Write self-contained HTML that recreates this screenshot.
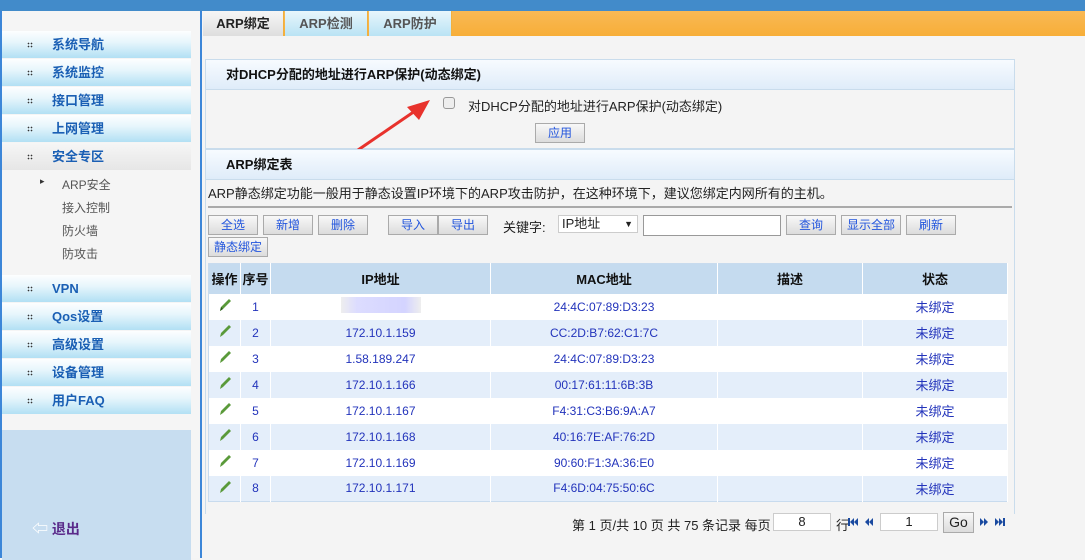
<!DOCTYPE html>
<html><head><meta charset="utf-8"><style>
*{margin:0;padding:0;box-sizing:border-box}
body{width:1085px;height:558px;overflow:hidden;background:#f4f4f4;font-family:"Liberation Sans","Noto Sans CJK SC",sans-serif;font-size:12px;position:relative;color:#222}
.top{position:absolute;left:0;top:0;width:1085px;height:11px;background:#428bca}
.side{position:absolute;left:0;top:11px;width:202px;height:547px;background:#f5f5f5;border-left:2px solid #3c86d8;border-right:2px solid #3c86d8}
.mi{position:absolute;left:0;width:189px;height:27px;background:linear-gradient(#fdfeff,#e8f6fc 40%,#b2e0f4);color:#1a5fb4;font-weight:bold;font-size:13px;line-height:27px;padding-left:50px}
.mi:before{content:"";position:absolute;left:25px;top:11px;width:6px;height:6px;background:radial-gradient(circle,#333 35%,transparent 40%) 0 0/3px 3px}
.mi.g{background:linear-gradient(#f6f6f6,#e6e6e6)}
.sub{position:absolute;left:60px;font-size:12px;color:#555}
.low{position:absolute;left:0;top:419px;width:189px;height:130px;background:#c7ddf0}
.tabs{position:absolute;left:203px;top:11px;width:882px;height:25px;background:linear-gradient(#f9b955,#f7ae38)}
.tab{position:absolute;top:0;height:25px;line-height:25px;text-align:center;font-weight:bold;font-size:13px;color:#555;background:linear-gradient(#e8f6fc,#b9e3f4);border-right:1px solid #f0b040}
.panel{position:absolute;left:205px;width:810px;border:1px solid #c9dcec;background:#f4f4f4}
.ph{height:30px;line-height:30px;padding-left:20px;font-weight:bold;font-size:13px;background:linear-gradient(#f7fbff,#dfecf9);border-bottom:1px solid #c9dcec;color:#111}
.btn{position:absolute;height:20px;border:1px solid #aaa;background:linear-gradient(#f8f8f8,#dcdcdc);color:#2255dd;font-size:12px;line-height:18px;text-align:center}
table{position:absolute;left:208px;top:263px;width:800px;border-collapse:collapse;border:1px solid #c8dbee}
th{height:30px;background:#c5dbef;font-size:13px;border-right:1px solid #fff;color:#111}
td{height:26px;text-align:center;color:#2233bb;font-family:"Liberation Sans",sans-serif;font-size:12px;border-right:1px solid #fff}
tr.a td{background:#fff}tr.b td{background:#e4eefa}
td.s{font-family:"Liberation Sans","Noto Sans CJK SC",sans-serif;font-size:13px}
.pg{position:absolute;font-size:13px;color:#222;white-space:nowrap}
.in{position:absolute;height:18px;border:1px solid #ccc;background:#fff;text-align:center;font-size:13px;line-height:16px}
</style></head><body>
<div class="top"></div>
<div class="side">
<div class="mi" style="top:20px">系统导航</div>
<div class="mi" style="top:48px">系统监控</div>
<div class="mi" style="top:76px">接口管理</div>
<div class="mi" style="top:104px">上网管理</div>
<div class="mi g" style="top:132px">安全专区</div>
<div class="sub" style="top:165px;left:38px;font-size:9px;color:#333">▸</div>
<div class="sub" style="top:165px">ARP安全</div>
<div class="sub" style="top:188px">接入控制</div>
<div class="sub" style="top:211px">防火墙</div>
<div class="sub" style="top:234px">防攻击</div>
<div class="mi" style="top:264px">VPN</div>
<div class="mi" style="top:292px">Qos设置</div>
<div class="mi" style="top:320px">高级设置</div>
<div class="mi" style="top:348px">设备管理</div>
<div class="mi" style="top:376px">用户FAQ</div>
<div class="low"><div style="position:absolute;left:30px;top:85px;font-size:14px;font-weight:bold;color:#5a2a8a"><span style="color:#fff;font-size:16px">⇦</span> 退出</div></div>
</div>
<div class="tabs">
<div class="tab" style="left:0;width:81px;background:linear-gradient(#f6f6f6,#dedede);color:#222">ARP绑定</div>
<div class="tab" style="left:82px;width:83px">ARP检测</div>
<div class="tab" style="left:166px;width:83px">ARP防护</div>
</div>
<div class="panel" style="top:59px;height:90px"><div class="ph">对DHCP分配的地址进行ARP保护(动态绑定)</div>
<div style="position:absolute;left:237px;top:37px;width:12px;height:12px;border:1px solid #999;border-radius:3px;background:#eee"></div>
<div style="position:absolute;left:262px;top:36px;font-size:13px">对DHCP分配的地址进行ARP保护(动态绑定)</div>
<div class="btn" style="left:329px;top:63px;width:50px">应用</div>
</div>
<svg style="position:absolute;left:355px;top:95px" width="80" height="58"><line x1="3" y1="55" x2="60" y2="16" stroke="#e8322c" stroke-width="3"/><polygon points="75,5 52,12 64,25" fill="#e8322c"/></svg>
<div class="panel" style="top:149px;height:365px;border-bottom:none"><div class="ph">ARP绑定表</div>
<div style="position:absolute;left:2px;top:33px;font-size:13px">ARP静态绑定功能一般用于静态设置IP环境下的ARP攻击防护，在这种环境下，建议您绑定内网所有的主机。</div>
<div style="position:absolute;left:2px;top:56px;width:804px;height:2px;background:#aaa"></div>
</div>
<div class="btn" style="left:208px;top:215px;width:50px">全选</div>
<div class="btn" style="left:263px;top:215px;width:50px">新增</div>
<div class="btn" style="left:318px;top:215px;width:50px">删除</div>
<div class="btn" style="left:388px;top:215px;width:50px">导入</div>
<div class="btn" style="left:438px;top:215px;width:50px">导出</div>
<div style="position:absolute;left:503px;top:217px;font-size:13px">关键字:</div>
<div class="in" style="left:558px;top:215px;width:80px;text-align:left;padding-left:3px">IP地址 <span style="position:absolute;right:4px;font-size:9px">▼</span></div>
<div class="in" style="left:643px;top:215px;width:138px;height:21px;border-color:#999"></div>
<div class="btn" style="left:786px;top:215px;width:50px">查询</div>
<div class="btn" style="left:841px;top:215px;width:60px">显示全部</div>
<div class="btn" style="left:906px;top:215px;width:50px">刷新</div>
<div class="btn" style="left:208px;top:237px;width:60px">静态绑定</div>
<table>
<tr><th style="width:32px">操作</th><th style="width:30px">序号</th><th style="width:220px">IP地址</th><th style="width:227px">MAC地址</th><th style="width:145px">描述</th><th>状态</th></tr>
<tr class="a"><td><svg width="14" height="14"><path d="M2 13 L3 9 L11 1 L13 3 L5 11 Z" fill="#5a9a3a"/><path d="M2 13 L3 9 L5 11Z" fill="#2a5a1a"/></svg></td><td>1</td><td><span style="display:inline-block;width:80px;height:16px;background:linear-gradient(90deg,#eee 0,#dcdcff 20%,#d4d4ff 80%,#eee)"></span></td><td>24:4C:07:89:D3:23</td><td></td><td class="s">未绑定</td></tr>
<tr class="b"><td><svg width="14" height="14"><path d="M2 13 L3 9 L11 1 L13 3 L5 11 Z" fill="#5a9a3a"/></svg></td><td>2</td><td>172.10.1.159</td><td>CC:2D:B7:62:C1:7C</td><td></td><td class="s">未绑定</td></tr>
<tr class="a"><td><svg width="14" height="14"><path d="M2 13 L3 9 L11 1 L13 3 L5 11 Z" fill="#5a9a3a"/></svg></td><td>3</td><td>1.58.189.247</td><td>24:4C:07:89:D3:23</td><td></td><td class="s">未绑定</td></tr>
<tr class="b"><td><svg width="14" height="14"><path d="M2 13 L3 9 L11 1 L13 3 L5 11 Z" fill="#5a9a3a"/></svg></td><td>4</td><td>172.10.1.166</td><td>00:17:61:11:6B:3B</td><td></td><td class="s">未绑定</td></tr>
<tr class="a"><td><svg width="14" height="14"><path d="M2 13 L3 9 L11 1 L13 3 L5 11 Z" fill="#5a9a3a"/></svg></td><td>5</td><td>172.10.1.167</td><td>F4:31:C3:B6:9A:A7</td><td></td><td class="s">未绑定</td></tr>
<tr class="b"><td><svg width="14" height="14"><path d="M2 13 L3 9 L11 1 L13 3 L5 11 Z" fill="#5a9a3a"/></svg></td><td>6</td><td>172.10.1.168</td><td>40:16:7E:AF:76:2D</td><td></td><td class="s">未绑定</td></tr>
<tr class="a"><td><svg width="14" height="14"><path d="M2 13 L3 9 L11 1 L13 3 L5 11 Z" fill="#5a9a3a"/></svg></td><td>7</td><td>172.10.1.169</td><td>90:60:F1:3A:36:E0</td><td></td><td class="s">未绑定</td></tr>
<tr class="b"><td><svg width="14" height="14"><path d="M2 13 L3 9 L11 1 L13 3 L5 11 Z" fill="#5a9a3a"/></svg></td><td>8</td><td>172.10.1.171</td><td>F4:6D:04:75:50:6C</td><td></td><td class="s">未绑定</td></tr>
</table>
<div class="pg" style="left:572px;top:515px">第 1 页/共 10 页 共 75 条记录 每页</div>
<div class="in" style="left:773px;top:513px;width:58px">8</div>
<div class="pg" style="left:836px;top:515px">行</div>
<svg style="position:absolute;left:848px;top:517px" width="30" height="10" fill="#1a4aa0"><rect x="0" y="1" width="2" height="8"/><path d="M2 5L6 1V9Z M6 5L10 1V9Z M17 5L21 1V9Z M21 5L25 1V9Z"/></svg>
<div class="in" style="left:880px;top:513px;width:58px">1</div>
<div class="btn" style="left:943px;top:512px;width:31px;height:21px;color:#222;font-size:14px">Go</div>
<svg style="position:absolute;left:980px;top:517px" width="30" height="10" fill="#1a4aa0"><path d="M0 1L4 5L0 9Z M4 1L8 5L4 9Z M15 1L19 5L15 9Z M19 1L23 5L19 9Z"/><rect x="23" y="1" width="2" height="8"/></svg>
</body></html>
